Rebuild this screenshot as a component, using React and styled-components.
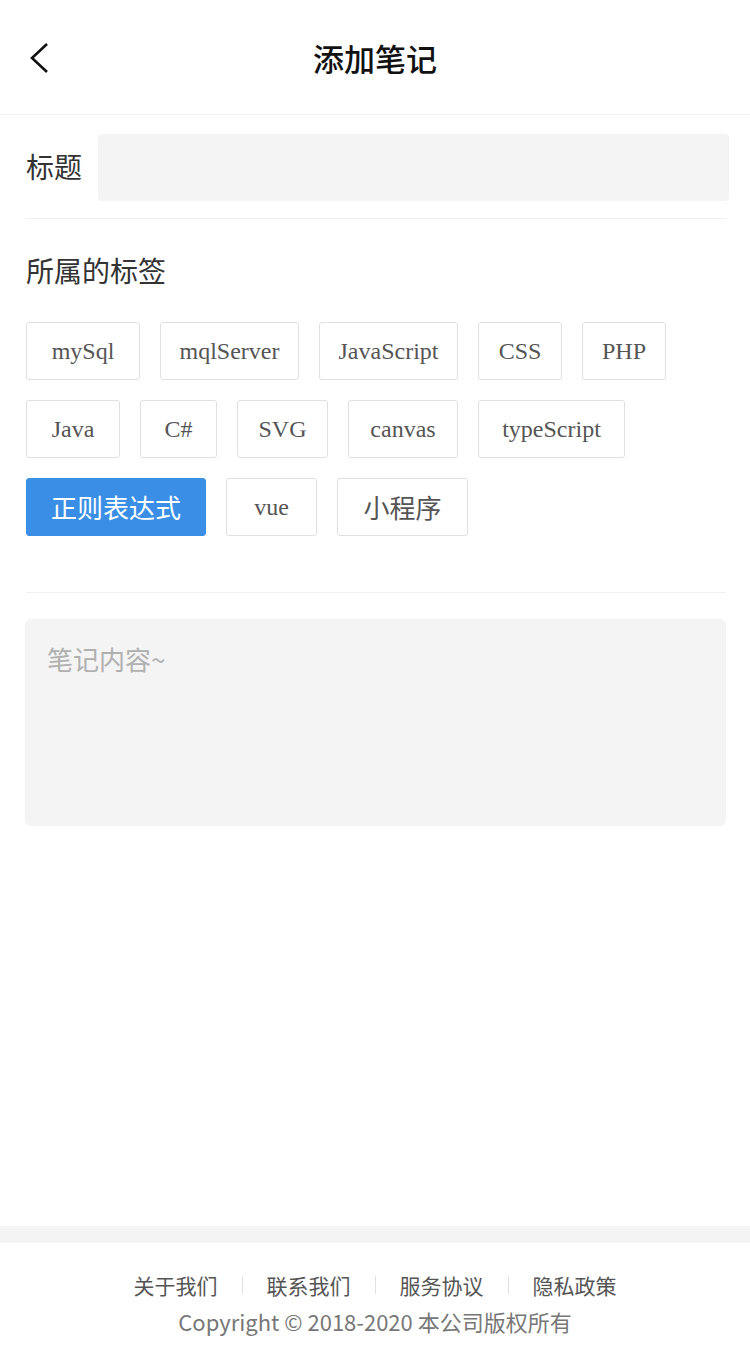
import { createGlobalStyle } from 'styled-components';
import styled from 'styled-components';

const GlobalStyle = createGlobalStyle`
  body {
    margin: 0;
    background: #fff;
    font-family: "Noto Sans CJK SC", "Noto Sans", sans-serif;
  }
`;

const Page = styled.div`
  min-height: 100vh;
  display: flex;
  flex-direction: column;
`;

const Header = styled.div`
  height: 114px;
  border-bottom: 1px solid #f2f2f2;
  display: grid;
  grid-template-columns: 90px 1fr 90px;
  align-items: center;
`;

const BackButton = styled.div`
  padding-left: 28px;
  display: flex;
  align-items: center;
  padding-top: 1px;
`;

const Title = styled.div`
  text-align: center;
  font-size: 31px;
  font-weight: 500;
  color: #111;
`;

const Main = styled.div`
  flex: 1;
  padding: 0 24px 0 26px;
`;

const TitleRow = styled.div`
  display: flex;
  align-items: center;
  padding: 19px 0 17px;
  border-bottom: 1px solid #f0f0f0;
`;

const Label = styled.div`
  width: 72px;
  font-size: 28px;
  color: #333;
  margin-top: -4px;
`;

const TitleInput = styled.input`
  flex: 1;
  box-sizing: border-box;
  height: 67px;
  padding: 0 16px;
  margin: 0 -3px 0 0;
  border: none;
  border-radius: 4px;
  background: #f4f4f4;
  outline: none;
`;

const TagSection = styled.div`
  padding: 31px 0 56px;
  border-bottom: 1px solid #f0f0f0;
`;

const SectionTitle = styled.div`
  font-size: 28px;
  line-height: 40px;
  color: #333;
  margin-bottom: 32px;
`;

const TagList = styled.div`
  display: flex;
  flex-wrap: wrap;
  gap: 20px 20px;
`;

const Tag = styled.div`
  box-sizing: border-box;
  width: ${({ $w }) => $w}px;
  height: 58px;
  line-height: 56px;
  text-align: center;
  white-space: nowrap;
  border: 1px solid ${({ $active }) => ($active ? '#3a8ee6' : '#e0e0e0')};
  border-radius: 3px;
  background: ${({ $active }) => ($active ? '#3a8ee6' : '#fff')};
  color: ${({ $active }) => ($active ? '#fff' : '#555')};
  font-family: ${({ $cn }) => ($cn ? '"Noto Sans CJK SC", sans-serif' : '"Liberation Serif", "Noto Sans CJK SC", serif')};
  font-size: ${({ $cn }) => ($cn ? '26px' : '24px')};
`;

const NoteArea = styled.textarea`
  display: block;
  box-sizing: border-box;
  width: calc(100% + 1px);
  margin: 26px 0 0 -1px;
  height: 207px;
  padding: 22px 22px;
  border: none;
  border-radius: 6px;
  background: #f4f4f4;
  font-family: "Noto Sans CJK SC", sans-serif;
  font-size: 26px;
  line-height: 36px;
  color: #333;
  resize: none;
  outline: none;
  &::placeholder {
    color: #b0b0b0;
  }
`;

const Footer = styled.div`
  border-top: 17px solid #f4f4f4;
  padding: 24px 0 12px;
  text-align: center;
`;

const LinkRow = styled.div`
  display: flex;
  justify-content: center;
  align-items: center;
  height: 36px;
  font-size: 21px;
  color: #555;
`;

const Sep = styled.span`
  width: 1px;
  height: 18px;
  background: #e0e0e0;
  margin: 0 24px;
`;

const Copyright = styled.div`
  height: 36px;
  line-height: 36px;
  font-size: 22px;
  color: #777;
`;

const tags = [
  { name: 'mySql', w: 114 },
  { name: 'mqlServer', w: 139 },
  { name: 'JavaScript', w: 139 },
  { name: 'CSS', w: 84 },
  { name: 'PHP', w: 84 },
  { name: 'Java', w: 94 },
  { name: 'C#', w: 77 },
  { name: 'SVG', w: 91 },
  { name: 'canvas', w: 110 },
  { name: 'typeScript', w: 147 },
  { name: '正则表达式', w: 180, cn: true, active: true },
  { name: 'vue', w: 91 },
  { name: '小程序', w: 131, cn: true },
];

const links = ['关于我们', '联系我们', '服务协议', '隐私政策'];

const App = () => {
  return (
    <Page>
      <GlobalStyle />
      <Header>
        <BackButton>
          <svg width="22" height="32" viewBox="0 0 22 32">
            <polyline points="19,2 4,16 19,30" fill="none" stroke="#111" strokeWidth="2.6" />
          </svg>
        </BackButton>
        <Title>添加笔记</Title>
        <div />
      </Header>
      <Main>
        <TitleRow>
          <Label>标题</Label>
          <TitleInput />
        </TitleRow>
        <TagSection>
          <SectionTitle>所属的标签</SectionTitle>
          <TagList>
            {tags.map((t) => (
              <Tag key={t.name} $w={t.w} $cn={t.cn} $active={t.active}>
                {t.name}
              </Tag>
            ))}
          </TagList>
        </TagSection>
        <NoteArea placeholder="笔记内容~" />
      </Main>
      <Footer>
        <LinkRow>
          {links.map((l, i) => (
            <span key={l} style={{ display: 'contents' }}>
              {i > 0 && <Sep />}
              <span>{l}</span>
            </span>
          ))}
        </LinkRow>
        <Copyright>Copyright © 2018-2020 本公司版权所有</Copyright>
      </Footer>
    </Page>
  );
};

export default App;
